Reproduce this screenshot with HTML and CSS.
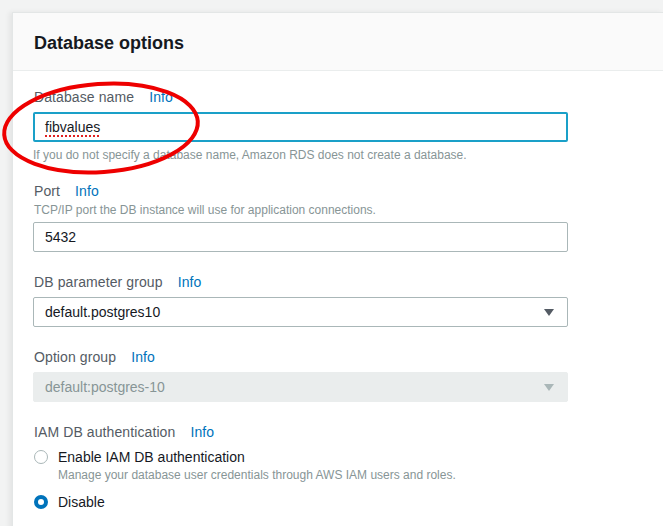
FILE: index.html
```html
<!DOCTYPE html>
<html>
<head>
<meta charset="utf-8">
<link rel="stylesheet" href="styles.css">
</head>
<body>
<div class="card">
  <div class="card-header"><h2>Database options</h2></div>
  <div class="card-body">
    <div class="field f-first">
      <div class="label">Database name <a class="info">Info</a></div>
      <div class="input focused"><span class="typo">fibvalues</span></div>
      <div class="help">If you do not specify a database name, Amazon RDS does not create a database.</div>
    </div>
    <div class="field f-port">
      <div class="label">Port <a class="info">Info</a></div>
      <div class="desc">TCP/IP port the DB instance will use for application connections.</div>
      <div class="input">5432</div>
    </div>
    <div class="field">
      <div class="label">DB parameter group <a class="info">Info</a></div>
      <div class="input select">default.postgres10<span class="caret"></span></div>
    </div>
    <div class="field">
      <div class="label">Option group <a class="info">Info</a></div>
      <div class="input select disabled">default:postgres-10<span class="caret"></span></div>
    </div>
    <div class="field">
      <div class="label">IAM DB authentication <a class="info">Info</a></div>
      <div class="radio"><span class="dot"></span><span class="rtext">Enable IAM DB authentication</span></div>
      <div class="rdesc">Manage your database user credentials through AWS IAM users and roles.</div>
      <div class="radio r-last"><span class="dot on"></span><span class="rtext">Disable</span></div>
    </div>
  </div>
</div>
<svg class="annot" width="210" height="104" viewBox="0 0 210 104">
  <ellipse cx="101" cy="49" rx="97" ry="44" transform="rotate(-4 101 49)" fill="none" stroke="#ee0000" stroke-width="4"/>
</svg>
</body>
</html>
```
FILE: styles.css
```css
html, body { margin: 0; padding: 0; }
body {
  background: #f2f3f3;
  font-family: "Liberation Sans", Arial, sans-serif;
  width: 663px;
  height: 526px;
  overflow: hidden;
  position: relative;
}
.card {
  margin: 12px 0 0 12px;
  width: 651px;
  background: #fff;
  border: 1px solid #e3e6e6;
  border-right: none;
  box-shadow: -3px 0 5px rgba(0,0,0,0.06);
}
.card-header {
  height: 57px;
  background: #fafafa;
  border-bottom: 1px solid #eaeded;
  padding-left: 21px;
  display: flex;
  align-items: center;
}
.card-header h2 {
  margin: 0;
  font-size: 18px;
  font-weight: bold;
  color: #16191f;
  padding-top: 4px;
}
.card-body {
  padding: 16px 0 20px 20px;
  width: 535px;
}
.field { margin-bottom: 20px; display: flex; flex-direction: column; }
.f-first { margin-bottom: 18px; }
.label {
  font-size: 14px;
  line-height: 20px;
  color: #545b64;
  margin-left: 1px;
  letter-spacing: 0.1px;
}
.info {
  color: #0073bb;
  margin-left: 11px;
}
.input {
  margin-top: 5px;
  height: 30px;
  box-sizing: border-box;
  border: 1px solid #aab7b8;
  border-radius: 2px;
  padding-left: 11px;
  font-size: 14px;
  line-height: 28px;
  color: #16191f;
  position: relative;
}
.input.focused {
  border: 2px solid #1aa0c8;
  line-height: 26px;
  padding-left: 10px;
}
.typo {
  text-decoration: underline dotted #e02020;
  text-decoration-thickness: 2px;
  text-underline-offset: 3px;
}
.help, .desc, .rdesc {
  font-size: 12px;
  line-height: 16px;
  color: #879596;
}
.help { margin-top: 5px; }
.desc { margin-top: 1px; margin-left: 1px; }
.f-port .input { margin-top: 4px; }
.select.disabled {
  background: #eaeded;
  border-color: #eaeded;
  color: #879596;
}
.caret {
  position: absolute;
  right: 13px;
  top: 11px;
  width: 0;
  height: 0;
  border-left: 5px solid transparent;
  border-right: 5px solid transparent;
  border-top: 7px solid #545b64;
}
.disabled .caret { border-top-color: #aab7b8; }
.radio {
  margin-top: 5px;
  display: flex;
  align-items: center;
  height: 20px;
}
.r-last { margin-top: 9px; }
.dot {
  width: 14px;
  height: 14px;
  box-sizing: border-box;
  border: 1.5px solid #aab7b8;
  border-radius: 50%;
  margin-left: 1px;
  background: #fff;
}
.dot.on {
  border: 4px solid #0073bb;
}
.rtext {
  margin-left: 10px;
  font-size: 14px;
  color: #16191f;
}
.rdesc { margin-left: 25px; }
.annot {
  position: absolute;
  left: 0;
  top: 79px;
}
```
